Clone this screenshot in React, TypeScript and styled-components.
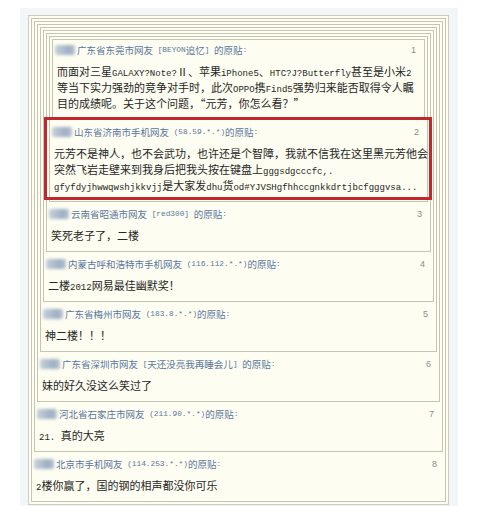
import React from "react";
import styled, { createGlobalStyle } from "styled-components";

type FloorT = {
    no: number;
    author: string;
    lines: string[];
    marked?: boolean;
};

const floors: FloorT[] = [
    {
        no: 1,
        author: "广东省东莞市网友 [BEYON追忆] 的原贴:",
        lines: [
            "而面对三星GALAXY?Note?Ⅱ、苹果iPhone5、HTC?J?Butterfly甚至是小米2",
            "等当下实力强劲的竞争对手时，此次OPPO携Find5强势归来能否取得令人瞩",
            "目的成绩呢。关于这个问题，“元芳，你怎么看？”"
        ]
    },
    {
        no: 2,
        author: "山东省济南市手机网友 (58.59.*.*)的原贴:",
        lines: [
            "元芳不是神人，也不会武功，也许还是个智障，我就不信我在这里黑元芳他会",
            "突然飞岩走壁来到我身后把我头按在键盘上gggsdgcccfc,.",
            "gfyfdyjhwwqwshjkkvjj是大家发dhu货od#YJVSHgfhhccgnkkdrtjbcfgggvsa..."
        ],
        marked: true
    },
    { no: 3, author: "云南省昭通市网友 [red300] 的原贴:", lines: ["笑死老子了，二楼"] },
    { no: 4, author: "内蒙古呼和浩特市手机网友 (116.112.*.*)的原贴:", lines: ["二楼2012网易最佳幽默奖！"] },
    { no: 5, author: "广东省梅州市网友 (183.8.*.*)的原贴:", lines: ["神二楼！！！"] },
    { no: 6, author: "广东省深圳市网友 [天还没亮我再睡会儿] 的原贴:", lines: ["妹的好久没这么笑过了"] },
    { no: 7, author: "河北省石家庄市网友 (211.90.*.*)的原贴:", lines: ["21. 真的大亮"] },
    { no: 8, author: "北京市手机网友 (114.253.*.*)的原贴:", lines: ["2楼你赢了，国的钢的相声都没你可乐"] }
];

// ascii runs get the narrow mono face, like the old SimSun latin
function mixed(text: string, scale: number) {
    return text.split(/([\x20-\x7e]+)/).map((part, i) =>
        /^[\x20-\x7e]+$/.test(part)
            ? <Latin key={i} $scale={scale}>{part}</Latin>
            : part
    );
}

function Floor({ index }: { index: number }) {
    const floor = floors[index];

    return (
        <FloorBox>
            {index > 0 && <Floor index={index - 1} />}
            <Own $marked={!!floor.marked}>
                <Head $first={index === 0}>
                    <Author>
                        <Blur />
                        {mixed(floor.author, 0.82)}
                    </Author>
                    <Num>{floor.no}</Num>
                </Head>
                <Body>
                    {floor.lines.map((line, i) => (
                        <Line key={i}>{mixed(line, 0.82)}</Line>
                    ))}
                </Body>
            </Own>
        </FloorBox>
    );
}

export default function App() {
    return (
        <>
            <GlobalStyle />
            <Page>
                <Panel>
                    <Thread>
                        <Floor index={floors.length - 1} />
                    </Thread>
                </Panel>
            </Page>
        </>
    );
}

// styles

const GlobalStyle = createGlobalStyle`
    html, body {
        margin: 0;
        background: #ffffff;
        font-family: "Noto Sans CJK SC", "Noto Sans", sans-serif;
    }
`;
const Page = styled.div`
    padding: 8px 40px 0 20px;
    height: 506px;
    box-sizing: border-box;
    overflow: hidden;
`;
const Panel = styled.div`
    background: #f2f6f9;
    padding: 7px 9px 0 8px;
    min-height: 498px;
`;
const Thread = styled.div`
    border: 1px solid #cdccbd;
    background: #fdfdf1;
    padding: 2px;
`;
const FloorBox = styled.div`
    border: 1px solid #c6c5b4;
    background: #fdfdf1;
    padding: 2px 2px 0 2px;
`;
const Own = styled.div<{ $marked: boolean }>`
    position: relative;
    padding-bottom: 8px;

    ${({ $marked }) => $marked && `
        &::after {
            content: "";
            position: absolute;
            top: -3px;
            bottom: 1px;
            left: -8px;
            right: -7px;
            border: 3px solid #c0282d;
            z-index: 1;
        }
    `}
`;
const Head = styled.div<{ $first: boolean }>`
    display: flex;
    align-items: center;
    justify-content: space-between;
    height: 14px;
    padding: ${({ $first }) => ($first ? "1px" : "5px")} 6px 0 0;
    font-size: 9.5px;
    line-height: 14px;
`;
const Author = styled.div`
    display: flex;
    align-items: center;
    color: #5a76a0;
    white-space: pre;
`;
const Blur = styled.span`
    display: inline-block;
    width: 20px;
    height: 10px;
    margin-right: 2px;
    border-radius: 2px;
    background: linear-gradient(90deg, #c6d0db, #9eafc2 70%, #b9c5d3);
    filter: blur(1.5px);
`;
const Num = styled.span`
    color: #8c8c8c;
    font-family: "Liberation Sans", sans-serif;
    font-size: 9px;
`;
const Body = styled.div`
    margin-top: 6px;
    padding-left: 2px;
    font-size: 11px;
    line-height: 16px;
    color: #262626;
    white-space: pre;
`;
const Line = styled.div`
    height: 16px;
`;
const Latin = styled.span<{ $scale: number }>`
    font-family: "Liberation Mono", monospace;
    font-size: ${({ $scale }) => $scale}em;
`;
